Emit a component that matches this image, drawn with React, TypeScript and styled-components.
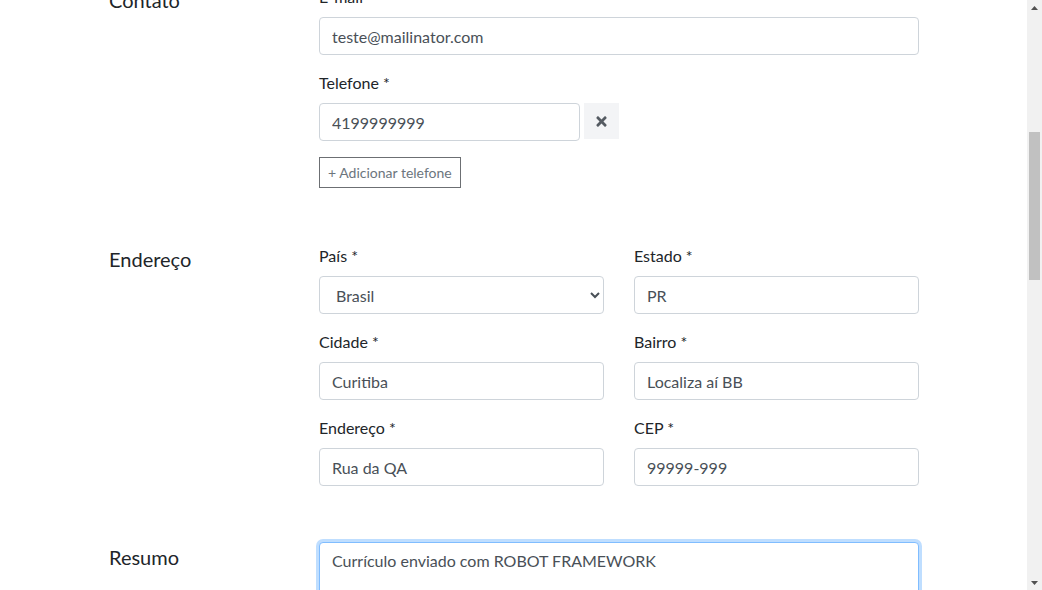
import React, { useLayoutEffect, useRef } from "react";
import styled, { createGlobalStyle, css } from "styled-components";
import { FaTimes } from "react-icons/fa";

const GlobalStyle = createGlobalStyle`
  html, body { margin: 0; padding: 0; height: 100%; overflow: hidden; }
  body {
    font-family: Lato, "Noto Sans", "Liberation Sans", sans-serif;
    color: #212529;
    background: #fff;
  }
  *, *::before, *::after { box-sizing: border-box; }
`;

const Window = styled.div`
  display: flex;
  height: 100vh;
  background: #fff;
`;

const Viewport = styled.div`
  flex: 1;
  min-width: 0;
  height: 100%;
  overflow: hidden;
`;

/* Drawing of the browser's classic scrollbar */
const ScrollBar = styled.div`
  width: 15px;
  flex: none;
  display: flex;
  flex-direction: column;
  background: #f1f1f1;
`;

const ScrollArrow = styled.div`
  height: 15px;
  display: flex;
  align-items: center;
  justify-content: center;
  color: #505050;
`;

const ScrollTrack = styled.div<{ $offset: number }>`
  flex: 1;
  padding: ${(p) => p.$offset}px 2px 0;
`;

const ScrollThumb = styled.div<{ $size: number }>`
  height: ${(p) => p.$size}px;
  background: #c1c1c1;
`;

const Page = styled.main`
  width: 810px;
  margin: 0 108px 0 auto;
  padding-top: 37px;
  min-height: 2232px;
`;

const PageTitle = styled.h1`
  margin: 0 0 12px;
  font-size: 32px;
  line-height: 40px;
  font-weight: 400;
`;

const Intro = styled.p`
  margin: 0 0 40px;
  font-size: 16px;
  line-height: 24px;
  color: #6c757d;
`;

const Section = styled.section`
  display: grid;
  grid-template-columns: 210px 600px;
  align-items: start;
  margin-bottom: 40px;
`;

const SectionTitle = styled.h2`
  margin: 0;
  font-size: 20px;
  line-height: 30px;
  font-weight: 400;
  color: #212529;
`;

const Fields = styled.div`
  display: flex;
  flex-direction: column;
`;

const TwoCols = styled.div`
  display: grid;
  grid-template-columns: 1fr 1fr;
  column-gap: 30px;
`;

const Group = styled.div`
  margin-bottom: 16px;
`;

const Label = styled.label`
  display: block;
  margin-bottom: 8px;
  font-size: 16px;
  line-height: 24px;
  color: #212529;
`;

const fieldBase = css`
  display: block;
  width: 100%;
  height: 38px;
  padding: 6px 12px;
  font-family: Lato, "Noto Sans", "Liberation Sans", sans-serif;
  font-size: 16px;
  line-height: 24px;
  color: #495057;
  background: #fff;
  border: 1px solid #ced4da;
  border-radius: 4px;
  outline: none;
`;

const Input = styled.input`
  ${fieldBase}
`;

const Select = styled.select`
  ${fieldBase}
`;

const TextArea = styled.textarea<{ $focused?: boolean }>`
  ${fieldBase}
  height: 150px;
  resize: vertical;
  ${(p) =>
    p.$focused &&
    css`
      border-color: #80bdff;
      box-shadow: 0 0 0 3px rgba(0, 123, 255, 0.25);
    `}
  &:focus {
    border-color: #80bdff;
    box-shadow: 0 0 0 3px rgba(0, 123, 255, 0.25);
  }
`;

const PhoneRow = styled.div`
  display: flex;
  align-items: flex-start;
  gap: 4px;
`;

const PhoneInput = styled(Input)`
  width: 261px;
`;

const RemoveButton = styled.button`
  width: 35px;
  height: 36px;
  padding: 0;
  display: flex;
  align-items: center;
  justify-content: center;
  border: none;
  background: #f3f4f6;
  color: #555b62;
  cursor: pointer;
`;

const OutlineButton = styled.button`
  padding: 4px 8px;
  font-family: Lato, "Noto Sans", "Liberation Sans", sans-serif;
  font-size: 14px;
  line-height: 21px;
  color: #6c757d;
  background: #fff;
  border: 1px solid #6c6f73;
  border-radius: 0;
  cursor: pointer;
`;

const SubmitButton = styled.button`
  padding: 8px 24px;
  font-family: Lato, "Noto Sans", "Liberation Sans", sans-serif;
  font-size: 16px;
  line-height: 24px;
  color: #fff;
  background: #007bff;
  border: 1px solid #007bff;
  border-radius: 4px;
`;

type FieldProps = { label: string; value: string; required?: boolean };

const Field = ({ label, value, required = true }: FieldProps) => (
  <Group>
    <Label>
      {label}
      {required ? " *" : ""}
    </Label>
    <Input defaultValue={value} />
  </Group>
);

const ArrowUp = () => (
  <svg width="7" height="4" viewBox="0 0 7 4" aria-hidden="true">
    <path d="M0 4 L3.5 0 L7 4 Z" fill="currentColor" />
  </svg>
);

const ArrowDown = () => (
  <svg width="7" height="4" viewBox="0 0 7 4" aria-hidden="true">
    <path d="M0 0 L7 0 L3.5 4 Z" fill="currentColor" />
  </svg>
);

export default function App() {
  const viewportRef = useRef<HTMLDivElement>(null);
  const contactRef = useRef<HTMLElement>(null);
  const summaryRef = useRef<HTMLTextAreaElement>(null);

  useLayoutEffect(() => {
    const vp = viewportRef.current;
    const sec = contactRef.current;
    const ta = summaryRef.current;
    if (ta) {
      ta.focus({ preventScroll: true });
      const len = ta.value.length;
      ta.setSelectionRange(len, len);
    }
    if (vp && sec) {
      const offset =
        sec.getBoundingClientRect().top - vp.getBoundingClientRect().top + vp.scrollTop;
      vp.scrollTop = offset + 15;
    }
  }, []);

  return (
    <>
      <GlobalStyle />
      <Window>
        <Viewport ref={viewportRef}>
          <Page>
            <PageTitle>Trabalhe conosco</PageTitle>
            <Intro>Preencha o formulário abaixo para enviar o seu currículo.</Intro>

            <Section>
              <SectionTitle>Dados pessoais</SectionTitle>
              <Fields>
                <Field label="Nome completo" value="Teste Robot" />
                <TwoCols>
                  <Field label="Data de nascimento" value="01/01/1990" />
                  <Field label="CPF" value="000.000.000-00" />
                </TwoCols>
                <TwoCols>
                  <Field label="Gênero" value="Não informado" required={false} />
                  <Field label="Estado civil" value="Solteiro" required={false} />
                </TwoCols>
              </Fields>
            </Section>

            <Section ref={contactRef}>
              <SectionTitle>Contato</SectionTitle>
              <Fields>
                <Group>
                  <Label>E-mail</Label>
                  <Input defaultValue="teste@mailinator.com" />
                </Group>
                <Group>
                  <Label>Telefone *</Label>
                  <PhoneRow>
                    <PhoneInput defaultValue="4199999999" />
                    <RemoveButton type="button" aria-label="Remover telefone">
                      <FaTimes size={15} />
                    </RemoveButton>
                  </PhoneRow>
                </Group>
                <Group>
                  <OutlineButton type="button">+ Adicionar telefone</OutlineButton>
                </Group>
              </Fields>
            </Section>

            <Section>
              <SectionTitle>Endereço</SectionTitle>
              <Fields>
                <TwoCols>
                  <Group>
                    <Label>País *</Label>
                    <Select defaultValue="Brasil">
                      <option>Brasil</option>
                      <option>Portugal</option>
                    </Select>
                  </Group>
                  <Field label="Estado" value="PR" />
                </TwoCols>
                <TwoCols>
                  <Field label="Cidade" value="Curitiba" />
                  <Field label="Bairro" value="Localiza aí BB" />
                </TwoCols>
                <TwoCols>
                  <Field label="Endereço" value="Rua da QA" />
                  <Field label="CEP" value="99999-999" />
                </TwoCols>
              </Fields>
            </Section>

            <Section>
              <SectionTitle>Resumo</SectionTitle>
              <Fields>
                <Group>
                  <TextArea
                    ref={summaryRef}
                    $focused
                    defaultValue="Currículo enviado com ROBOT FRAMEWORK"
                  />
                </Group>
              </Fields>
            </Section>

            <Section>
              <SectionTitle>Experiência</SectionTitle>
              <Fields>
                <Field label="Empresa" value="" required={false} />
                <TwoCols>
                  <Field label="Cargo" value="" required={false} />
                  <Field label="Período" value="" required={false} />
                </TwoCols>
              </Fields>
            </Section>

            <Section>
              <SectionTitle>Formação</SectionTitle>
              <Fields>
                <Field label="Instituição" value="" required={false} />
                <Field label="Curso" value="" required={false} />
                <Group>
                  <SubmitButton type="submit">Enviar currículo</SubmitButton>
                </Group>
              </Fields>
            </Section>
          </Page>
        </Viewport>
        <ScrollBar aria-hidden="true">
          <ScrollArrow>
            <ArrowUp />
          </ScrollArrow>
          <ScrollTrack $offset={117}>
            <ScrollThumb $size={148} />
          </ScrollTrack>
          <ScrollArrow>
            <ArrowDown />
          </ScrollArrow>
        </ScrollBar>
      </Window>
    </>
  );
}
